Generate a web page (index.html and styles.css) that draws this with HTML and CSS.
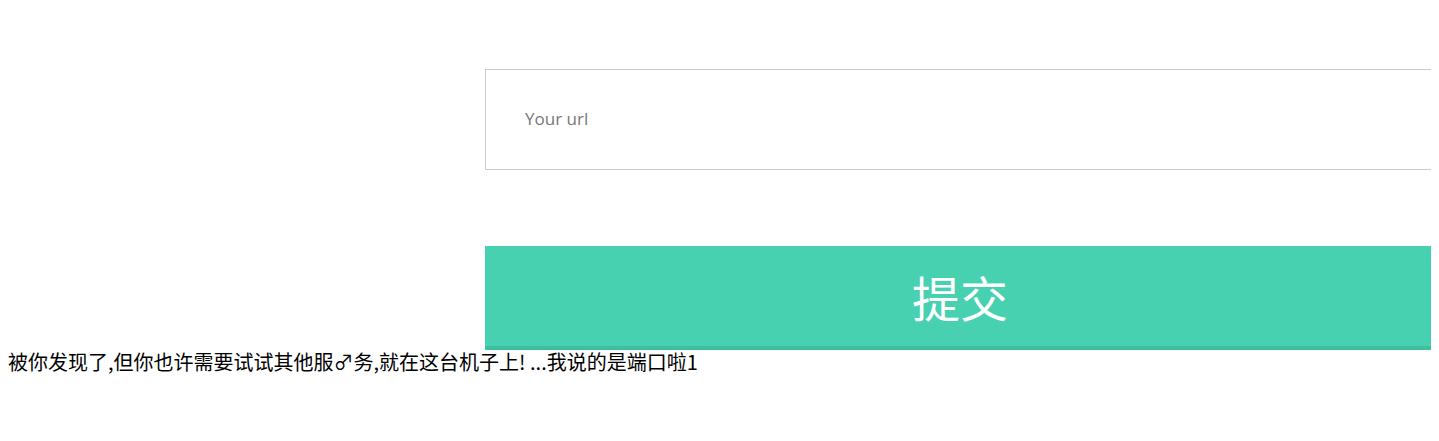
FILE: index.html
```html
<!DOCTYPE html>
<html lang="zh-CN">
<head>
    <meta charset="UTF-8">
    <meta name="viewport" content="width=device-width, initial-scale=1.0">
    <title>提交</title>
    <link rel="stylesheet" href="styles.css">
</head>
<body>
    <form class="url-form" id="urlForm">
        <input class="url-input" type="text" name="url" placeholder="Your url">
        <input class="submit-btn" type="submit" value="提交">
    </form>
    <div class="hint">被你发现了,但你也许需要试试其他服♂务,就在这台机子上! ...我说的是端口啦1</div>
</body>
</html>
```

FILE: styles.css
```css
body {
    margin: 8px;
    font-family: "Noto Sans CJK SC", sans-serif;
}
.url-form {
    display: flex;
    flex-direction: column;
    gap: 76px;
    width: 950px;
    margin: 61px 0 0 477px;
}
.url-input {
    box-sizing: border-box;
    width: 100%;
    height: 101px;
    padding: 0 39px 3px;
    border: 1px solid #ccc;
    border-radius: 0;
    font-family: "Open Sans", sans-serif;
    font-size: 17px;
    color: #333;
    outline: none;
}
.url-input::placeholder {
    color: #777;
}
.submit-btn {
    box-sizing: border-box;
    width: 100%;
    height: 104px;
    border: none;
    border-bottom: 4px solid #3cc19f;
    border-radius: 0;
    background-color: #47d1b0;
    color: #fff;
    font-family: "Noto Sans CJK SC", sans-serif;
    font-size: 48px;
    cursor: pointer;
}
.hint {
    font-size: 20px;
    line-height: 24px;
    color: #000;
}
```
